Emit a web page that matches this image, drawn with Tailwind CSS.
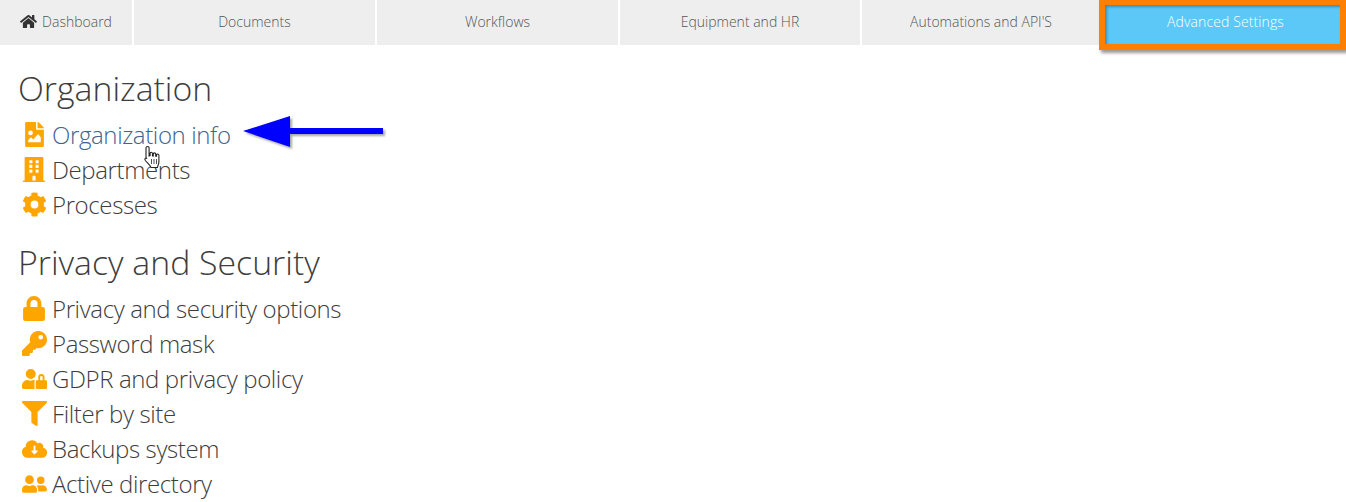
<!DOCTYPE html>
<html lang="en">
<head>
  <meta charset="UTF-8" />
  <title>Advanced Settings</title>
  <script src="https://cdn.jsdelivr.net/npm/@tailwindcss/browser@4"></script>
</head>
<body class="relative h-[502px] overflow-hidden bg-white font-['Open_Sans',sans-serif] font-light text-[#3d3d3d]">
  <!-- top menu -->
  <nav class="flex h-[45px] items-start gap-[2px] text-[14px] text-[#555]">
    <a class="flex h-[45px] w-[132px] items-center justify-center gap-[5px] bg-[#eee] pb-[2px]">
      <svg class="h-[15px] w-[17px] fill-[#333]" viewBox="0 0 576 512"><path d="M280.4 148.3 96 300.1V464a16 16 0 0 0 16 16l112-.3a16 16 0 0 0 16-16V368a16 16 0 0 1 16-16h64a16 16 0 0 1 16 16v95.6a16 16 0 0 0 16 16l112 .4a16 16 0 0 0 16-16V300L295.700 148.300a12.200 12.200 0 0 0-15.300 0zM571.600 251.500 488 182.600V44a12 12 0 0 0-12-12h-56a12 12 0 0 0-12 12v72.600L318.500 43a48 48 0 0 0-61 0L4.300 251.500a12 12 0 0 0-1.600 16.900l25.500 31A12 12 0 0 0 45.200 301l235.200-193.700a12.200 12.200 0 0 1 15.300 0L530.900 301a12 12 0 0 0 16.900-1.600l25.500-31a12 12 0 0 0-1.700-16.900z"/></svg>
      Dashboard
    </a>
    <a class="flex h-[45px] w-[241px] items-center justify-center bg-[#eee] pb-[2px]">Documents</a>
    <a class="flex h-[45px] w-[241px] items-center justify-center bg-[#eee] pb-[2px]">Workflows</a>
    <a class="flex h-[45px] w-[240px] items-center justify-center bg-[#eee] pb-[2px]">Equipment and HR</a>
    <a class="flex h-[45px] w-[238px] items-center justify-center bg-[#eee] pb-[2px]">Automations and API'S</a>
    <a class="-ml-[3px] flex h-[50px] w-[247px] items-center justify-center border-[6px] border-t-[5px] border-[#ff8000] bg-[#5bc8f7] pb-[6px] pl-[6px] text-[14px] tracking-[0.1px] text-white shadow-[2px_3px_3px_rgba(0,0,0,0.4),inset_2px_2px_3px_rgba(0,0,0,0.3)]">Advanced Settings</a>
  </nav>

  <main class="pl-[18px]">
    <h2 class="mt-[22px] h-[42px] text-[33.800px] leading-[42px]">Organization</h2>
    <ul class="mt-[8px] pl-[1px] text-[24px] leading-[35px] tracking-[-0.38px]">
      <li class="flex h-[35px] items-center gap-[3px] text-[#40648f]">
        <span class="flex w-[30px] justify-center">
          <svg class="h-[25px] w-[19px] fill-[#ffa500]" viewBox="0 0 384 512"><path d="M224 136V0H24A24 24 0 0 0 0 24v464a24 24 0 0 0 24 24h336a24 24 0 0 0 24-24V160H248a24 24 0 0 1-24-24zm-113 40a48 48 0 1 1 0 96 48 48 0 0 1 0-96zm209 240H64l0-48 56-56 48 48 96-112 56 64zM384 122v6H256V0h6a24 24 0 0 1 17 7l98 98a24 24 0 0 1 7 17z"/></svg>
        </span>
        Organization info
      </li>
      <li class="flex h-[35px] items-center gap-[3px]">
        <span class="flex w-[30px] justify-center">
          <svg class="h-[25px] w-[22px] fill-[#ffa500]" viewBox="0 0 448 512"><path d="M436 480h-20V24a24 24 0 0 0-24-24H56a24 24 0 0 0-24 24v456H12a12 12 0 0 0-12 12v20h448v-20a12 12 0 0 0-12-12zM128 76a12 12 0 0 1 12-12h40a12 12 0 0 1 12 12v40a12 12 0 0 1-12 12h-40a12 12 0 0 1-12-12V76zm0 96a12 12 0 0 1 12-12h40a12 12 0 0 1 12 12v40a12 12 0 0 1-12 12h-40a12 12 0 0 1-12-12v-40zm52 148h-40a12 12 0 0 1-12-12v-40a12 12 0 0 1 12-12h40a12 12 0 0 1 12 12v40a12 12 0 0 1-12 12zm76 160h-64v-84a12 12 0 0 1 12-12h40a12 12 0 0 1 12 12v84zm64-172a12 12 0 0 1-12 12h-40a12 12 0 0 1-12-12v-40a12 12 0 0 1 12-12h40a12 12 0 0 1 12 12v40zm0-96a12 12 0 0 1-12 12h-40a12 12 0 0 1-12-12v-40a12 12 0 0 1 12-12h40a12 12 0 0 1 12 12v40zm0-96a12 12 0 0 1-12 12h-40a12 12 0 0 1-12-12V76a12 12 0 0 1 12-12h40a12 12 0 0 1 12 12v40z"/></svg>
        </span>
        Departments
      </li>
      <li class="flex h-[35px] items-center gap-[3px]">
        <span class="flex w-[30px] justify-center">
          <svg class="h-[25px] w-[25px] fill-[#ffa500]" viewBox="0 0 512 512"><path d="M487 316l-42-25a190 190 0 0 0 0-70l42-25a12 12 0 0 0 6-14 248 248 0 0 0-55-95 12 12 0 0 0-15-2l-42 24a190 190 0 0 0-61-35V26a12 12 0 0 0-9-12 250 250 0 0 0-110 0 12 12 0 0 0-9 12v48a190 190 0 0 0-61 35L89 85a12 12 0 0 0-15 2 247 247 0 0 0-55 95 12 12 0 0 0 6 14l42 25a190 190 0 0 0 0 70l-42 25a12 12 0 0 0-6 14 248 248 0 0 0 55 95 12 12 0 0 0 15 2l42-24a190 190 0 0 0 61 35v48a12 12 0 0 0 9 12 250 250 0 0 0 110 0 12 12 0 0 0 9-12v-48a190 190 0 0 0 61-35l42 24a12 12 0 0 0 15-2 247 247 0 0 0 55-95 12 12 0 0 0-6-14zM256 336a80 80 0 1 1 0-160 80 80 0 0 1 0 160z"/></svg>
        </span>
        Processes
      </li>
    </ul>

    <h2 class="mt-[19px] h-[42px] text-[33.800px] leading-[42px]">Privacy and Security</h2>
    <ul class="mt-[8px] pl-[1px] text-[24px] leading-[35px] tracking-[-0.38px]">
      <li class="flex h-[35px] items-center gap-[3px]">
        <span class="flex w-[30px] justify-center">
          <svg class="h-[25px] w-[22px] fill-[#ffa500]" viewBox="0 0 448 512"><path d="M400 224h-24v-72C376 68 308 0 224 0S72 68 72 152v72H48a48 48 0 0 0-48 48v192a48 48 0 0 0 48 48h352a48 48 0 0 0 48-48V272a48 48 0 0 0-48-48zm-104 0H152v-72a72 72 0 0 1 144 0v72z"/></svg>
        </span>
        Privacy and security options
      </li>
      <li class="flex h-[35px] items-center gap-[3px]">
        <span class="flex w-[30px] justify-center">
          <svg class="h-[25px] w-[25px] fill-[#ffa500]" viewBox="0 0 512 512"><path d="M512 176a176 176 0 0 1-209 173l-24 27a24 24 0 0 1-18 8h-37v40a24 24 0 0 1-24 24h-40v40a24 24 0 0 1-24 24H24a24 24 0 0 1-24-24v-78a24 24 0 0 1 7-17l162-162A176 176 0 1 1 512 176zM336 128a48 48 0 1 0 96 0 48 48 0 0 0-96 0z"/></svg>
        </span>
        Password mask
      </li>
      <li class="flex h-[35px] items-center gap-[3px]">
        <span class="flex w-[30px] justify-center">
          <svg class="h-[20px] w-[25px] fill-[#ffa500]" viewBox="0 0 640 512"><path d="M224 256a128 128 0 1 0 0-256 128 128 0 0 0 0 256zm96 64a64 64 0 0 1 10-34 134 134 0 0 0-20-2h-17a174 174 0 0 1-146 0h-17A134 134 0 0 0 0 419v45a48 48 0 0 0 48 48h272V320zm288-32h-32v-80a80 80 0 0 0-160 0v80h-32a32 32 0 0 0-32 32v160a32 32 0 0 0 32 32h224a32 32 0 0 0 32-32V320a32 32 0 0 0-32-32zm-80 0h-64v-80a32 32 0 0 1 64 0v80z"/></svg>
        </span>
        GDPR and privacy policy
      </li>
      <li class="flex h-[35px] items-center gap-[3px]">
        <span class="flex w-[30px] justify-center">
          <svg class="h-[25px] w-[25px] fill-[#ffa500]" viewBox="0 0 512 512"><path d="M488 0H24C3 0-8 26 7 41l185 185v206a24 24 0 0 0 10 20l80 56c16 11 38 0 38-20V226L505 41c15-15 4-41-17-41z"/></svg>
        </span>
        Filter by site
      </li>
      <li class="flex h-[35px] items-center gap-[3px]">
        <span class="flex w-[30px] justify-center">
          <svg class="h-[20px] w-[25px] fill-[#ffa500]" viewBox="0 0 640 512"><path d="M537.600 226.600A96 96 0 0 0 448 96a95 95 0 0 0-53 16A160 160 0 0 0 96 192c0 2.700.1 5.400.2 8.100A144 144 0 0 0 144 480h368a128 128 0 0 0 25.600-253.400zm-139.900 93.700-67 67a16 16 0 0 1-22.600 0l-67-67c-10-10-3-27.300 11.300-27.300H296V180a12 12 0 0 1 12-12h24a12 12 0 0 1 12 12v113h43.400c14.300 0 21.400 17.300 11.300 27.300z"/></svg>
        </span>
        Backups system
      </li>
      <li class="flex h-[35px] items-center gap-[3px]">
        <span class="flex w-[30px] justify-center">
          <svg class="h-[20px] w-[25px] fill-[#ffa500]" viewBox="0 0 640 512"><path d="M192 256a112 112 0 1 0 0-224 112 112 0 0 0 0 224zm77 32h-8a155 155 0 0 1-138 0h-8A115 115 0 0 0 0 403v29a48 48 0 0 0 48 48h288a48 48 0 0 0 48-48v-29a115 115 0 0 0-115-115zm211-32a96 96 0 1 0 0-192 96 96 0 0 0 0 192zm48 32h-4c-14 5-29 8-44 8s-30-3-44-8h-4c-20 0-39 6-55 16a146 146 0 0 1 39 99v38c0 2 0 4-1 6h177a48 48 0 0 0 48-48 112 112 0 0 0-112-111z"/></svg>
        </span>
        Active directory
      </li>
    </ul>
  </main>

  <!-- annotation arrow -->
  <svg class="absolute left-[240px] top-[112px] h-[40px] w-[150px] drop-shadow-[2px_2px_1px_rgba(0,0,0,0.35)]" viewBox="0 0 150 40">
    <path d="M3 19 50 4v12h93v6H50v13z" fill="#0000ff"/>
  </svg>

  <!-- hand cursor -->
  <svg class="absolute left-[143px] top-[145px] h-[24px] w-[20px]" viewBox="0 0 19 24">
    <path d="M4 1.500c1 0 1.600.7 1.600 1.600V11l1-.3V8.500c0-1.600 2.200-1.600 2.400 0V11l.8 0V9c0-1.500 2.200-1.500 2.400 0v2.200l.8 0V10c0-1.400 2.200-1.400 2.400.2V17c0 2-1 3-1.500 5.500H7.500C6.500 20 4.500 18.500 1.800 15.500 .6 14 2.200 12.200 3.600 13.500L2.500 13V3.100c0-.9.600-1.600 1.500-1.600z" fill="#fff" stroke="#222" stroke-width="1.100"/>
    <path d="M8 14v5M10.500 14v5M13 14v5" stroke="#222" stroke-width=".8"/>
  </svg>
</body>
</html>
